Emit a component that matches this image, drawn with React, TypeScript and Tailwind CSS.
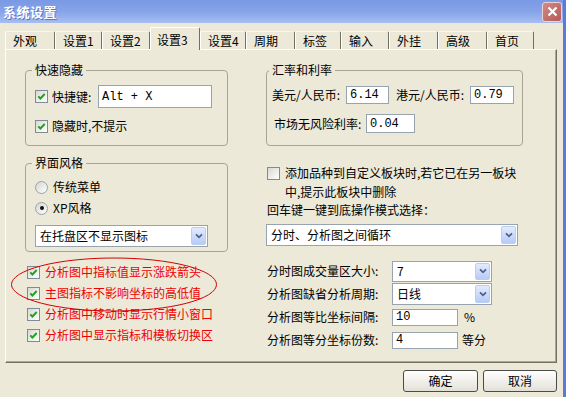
import React from "react";

const FONT = "font-['Noto_Sans_CJK_SC','Liberation_Sans',sans-serif]";
const MONO = "font-['Liberation_Mono',monospace]";

function Check({ checked = true }: { checked?: boolean }) {
  return (
    <span className="inline-flex w-[13px] h-[13px] shrink-0 items-center justify-center border border-[#7f8b97] bg-linear-to-br from-[#d9d9d2] to-white">
      {checked && (
        <svg width="9" height="9" viewBox="0 0 9 9">
          <path d="M1.3 4.3 L3.4 6.5 L7.7 2" stroke="#21a121" strokeWidth="1.9" fill="none" />
        </svg>
      )}
    </span>
  );
}

function Radio({ on = false }: { on?: boolean }) {
  return (
    <span className="inline-flex w-[13px] h-[13px] shrink-0 items-center justify-center rounded-full border border-[#9aa3ab] bg-linear-to-br from-[#d6d6cf] to-white">
      {on && <span className="w-[4px] h-[4px] rounded-full bg-[#111]" />}
    </span>
  );
}

function DropBtn() {
  return (
    <span className="flex w-[15px] shrink-0 items-center justify-center rounded-[2px] border border-[#bccdf2] bg-linear-to-b from-[#e3ebfe] to-[#b7cbf7]">
      <svg width="8" height="6" viewBox="0 0 8 6">
        <path d="M1 1.3 L4 4.3 L7 1.3" stroke="#4d6185" strokeWidth="1.7" fill="none" />
      </svg>
    </span>
  );
}

function Select({ cls, text }: { cls: string; text: string }) {
  return (
    <div className={`flex border border-[#97a3ae] bg-white p-[1px] ${cls}`}>
      <span className="flex flex-1 items-center pl-[3px] whitespace-nowrap">{text}</span>
      <DropBtn />
    </div>
  );
}

function Input({ cls, text }: { cls: string; text: string }) {
  return (
    <div className={`flex items-center border border-[#97a3ae] bg-white pl-[3px] ${MONO} text-[12px] ${cls}`}>
      {text}
    </div>
  );
}

const tabs: { label: string; w: string; sel?: boolean }[] = [
  { label: "外观", w: "w-[50px]" },
  { label: "设置1", w: "w-[47px]" },
  { label: "设置2", w: "w-[48px]" },
  { label: "设置3", w: "w-[50px]", sel: true },
  { label: "设置4", w: "w-[46px]" },
  { label: "周期", w: "w-[49px]" },
  { label: "标签", w: "w-[46px]" },
  { label: "输入", w: "w-[48px]" },
  { label: "外挂", w: "w-[49px]" },
  { label: "高级", w: "w-[49px]" },
  { label: "首页", w: "w-[47px]" },
];

export default function App() {
  return (
    <div className={`flex w-[570px] h-[397px] overflow-hidden bg-white text-[12px] leading-[14px] text-black ${FONT}`}>
      <div className="flex w-[566px] flex-col border-r-[3px] border-[#5d7ad8]">
        {/* title bar */}
        <div className="flex h-[23px] shrink-0 items-center justify-between bg-linear-to-b from-[#7a99e5] via-[#86a4e9] to-[#a6bdf0] pl-[3px] pr-[1px]">
          <span className="text-[13px] font-bold tracking-[0.5px] text-white [text-shadow:1px_1px_0_#5a78c8]">系统设置</span>
          <span className="flex w-[20px] h-[20px] items-center justify-center rounded-[3px] border border-[#ead2d2] bg-linear-to-br from-[#d48a85] to-[#b45a58]">
            <svg width="11" height="11" viewBox="0 0 11 11">
              <path d="M1.5 1.5 L9.5 9.5 M9.5 1.5 L1.5 9.5" stroke="white" strokeWidth="2.2" />
            </svg>
          </span>
        </div>

        {/* body */}
        <div className="flex flex-1 flex-col bg-[#ece9d8] pl-[5px] pr-[6px] pt-[4px]">
          {/* tabs */}
          <div className="flex h-[22px] items-end">
            {tabs.map((t) =>
              t.sel ? (
                <div
                  key={t.label}
                  className={`${t.w} relative z-10 -mb-px flex h-[23px] items-start rounded-t-[2px] border-l border-t border-r border-l-white border-t-white border-r-[#716f64] bg-[#ece9d8] pl-[6px] pt-[5px]`}
                >
                  {t.label}
                </div>
              ) : (
                <div
                  key={t.label}
                  className={`${t.w} flex h-[18px] items-center rounded-tr-[2px] border-l border-t border-r border-l-white border-t-[#f6f5ee] border-r-[#716f64] pl-[7px] pt-[1px]`}
                >
                  {t.label}
                </div>
              )
            )}
          </div>

          {/* panel */}
          <div className="relative flex h-[314px] shrink-0 gap-[38px] border-l border-t border-r border-b border-l-white border-t-white border-r-[#716f64] border-b-[#716f64] pl-[19px] pt-[13px] shadow-[inset_-1px_-1px_0_#aca899]">
            {/* left column */}
            <div className="flex w-[203px] flex-col">
              <fieldset className="h-[83px] rounded-[4px] border border-[#a8a596] pl-[9px]">
                <legend className="ml-[-3px] px-[3px] leading-[14px]">快速隐藏</legend>
                <div className="mt-[8px] flex h-[23px] items-center">
                  <Check />
                  <span className="ml-[4px] w-[46px]">快捷键:</span>
                  <Input cls="w-[114px] h-[23px]" text="Alt + X" />
                </div>
                <div className="mt-[11px] flex h-[14px] items-center">
                  <Check />
                  <span className="ml-[4px]">隐藏时,不提示</span>
                </div>
              </fieldset>

              <fieldset className="mt-[10px] h-[96px] rounded-[4px] border border-[#a8a596] pl-[9px]">
                <legend className="ml-[-3px] px-[3px] leading-[14px]">界面风格</legend>
                <div className="mt-[10px] flex h-[14px] items-center">
                  <Radio />
                  <span className="ml-[5px]">传统菜单</span>
                </div>
                <div className="mt-[7px] flex h-[14px] items-center">
                  <Radio on />
                  <span className="ml-[5px]">XP风格</span>
                </div>
                <Select cls="mt-[10px] w-[173px] h-[22px]" text="在托盘区不显示图标" />
              </fieldset>

              <div className="mt-[12px] flex flex-col gap-[5px] pl-[2px] text-[#f00000]">
                {["分析图中指标值显示涨跌箭头", "主图指标不影响坐标的高低值", "分析图中移动时显示行情小窗口", "分析图中显示指标和模板切换区"].map((s) => (
                  <div key={s} className="flex h-[16px] items-center">
                    <Check />
                    <span className="ml-[5px] whitespace-nowrap">{s}</span>
                  </div>
                ))}
              </div>
            </div>

            {/* right column */}
            <div className="flex w-[257px] flex-col">
              <fieldset className="h-[83px] rounded-[4px] border border-[#a8a596] pl-[5px]">
                <legend className="ml-[-3px] px-[3px] leading-[14px]">汇率和利率</legend>
                <div className="mt-[9px] flex h-[18px] items-center">
                  <span className="w-[74px] whitespace-nowrap">美元/人民币:</span>
                  <Input cls="w-[43px] h-[18px]" text="6.14" />
                  <span className="ml-[7px] w-[74px] whitespace-nowrap">港元/人民币:</span>
                  <Input cls="w-[44px] h-[18px]" text="0.79" />
                </div>
                <div className="mt-[10px] flex h-[19px] items-center">
                  <span className="w-[94px] pl-[2px] whitespace-nowrap">市场无风险利率:</span>
                  <Input cls="w-[49px] h-[19px]" text="0.04" />
                </div>
              </fieldset>

              <div className="mt-[17px] flex items-start pl-[1px]">
                <span className="mt-[4px]">
                  <Check checked={false} />
                </span>
                <span className="ml-[5px] whitespace-nowrap leading-[19px]">
                  添加品种到自定义板块时,若它已在另一板块
                  <br />
                  中,提示此板块中删除
                </span>
              </div>
              <div className="pl-[1px] leading-[18px] whitespace-nowrap">回车键一键到底操作模式选择：</div>
              <Select cls="mt-[5px] w-[252px] h-[22px]" text="分时、分析图之间循环" />

              <div className="mt-[14px] flex flex-col gap-[1px]">
                <div className="flex h-[22px] items-center">
                  <span className="w-[126px] pl-[1px] whitespace-nowrap">分时图成交量区大小:</span>
                  <Select cls="w-[100px] h-[21px]" text="7" />
                </div>
                <div className="flex h-[22px] items-center">
                  <span className="w-[126px] pl-[1px] whitespace-nowrap">分析图缺省分析周期:</span>
                  <Select cls="w-[100px] h-[22px]" text="日线" />
                </div>
                <div className="flex h-[22px] items-center">
                  <span className="w-[126px] pl-[1px] whitespace-nowrap">分析图等比坐标间隔:</span>
                  <Input cls="w-[66px] h-[17px]" text="10" />
                  <span className="ml-[6px]">%</span>
                </div>
                <div className="flex h-[22px] items-center">
                  <span className="w-[126px] pl-[1px] whitespace-nowrap">分析图等分坐标份数:</span>
                  <Input cls="w-[66px] h-[17px]" text="4" />
                  <span className="ml-[4px]">等分</span>
                </div>
              </div>
            </div>

            {/* red annotation ellipse */}
            <svg className="pointer-events-none absolute left-[4px] top-[207px] z-20" width="208" height="55" viewBox="0 0 208 55">
              <ellipse cx="104" cy="27.5" rx="102.5" ry="26.5" stroke="#d40000" strokeWidth="1" fill="none" />
            </svg>
          </div>

          {/* buttons */}
          <div className="mt-[7px] flex justify-end gap-[5px]">
            <button className="flex w-[75px] h-[22px] items-center justify-center rounded-[3px] border border-[#4a4a4a] bg-linear-to-b from-white to-[#e2e1d8]">确定</button>
            <button className="flex w-[74px] h-[22px] items-center justify-center rounded-[3px] border border-[#4a4a4a] bg-linear-to-b from-white to-[#e2e1d8]">取消</button>
          </div>
        </div>
      </div>
      <div className="flex-1 bg-white" />
    </div>
  );
}
